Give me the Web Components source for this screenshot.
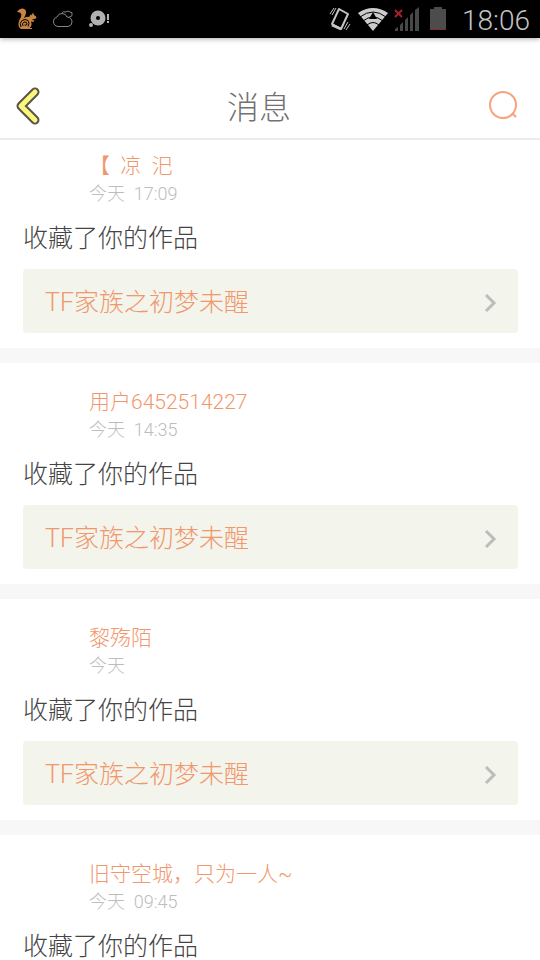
<!DOCTYPE html>
<html lang="zh-CN">
<head>
<meta charset="utf-8">
<meta name="viewport" content="width=device-width, initial-scale=1">
<title>消息</title>
<style>
body { margin: 0; background: #fff; font-family: Roboto, "Noto Sans CJK SC", sans-serif; font-weight: 300; }
</style>
</head>
<body>
<messages-app></messages-app>

<template id="status-bar">
<style>
:host { display: flex; align-items: center; justify-content: space-between; height: 38px; background: #000; padding: 0 10px 0 16px; box-shadow: 0 1px 5px #0005; }
div { display: flex; align-items: center; }
svg { display: block; }
.notes { gap: 14px; }
.system { gap: 6px; }
time { font-size: 28px; line-height: 38px; color: #c4c4c4; margin-left: 6px; padding-top: 4px; }
</style>
<div class="notes">
<svg width="22" height="22" viewBox="0 0 22 22" aria-hidden="true"><path fill="#c98440" d="M1 4Q3 0.500 6.500 0.500Q10.500 1 10 5Q9.500 8 7.500 10.500Q10 8 13 9L15 6L15.500 7.500L17 4.500L18 7Q20.500 8 20.500 9.500Q20 11 17.500 11L16 12L18.500 12.500L17.500 14L15 13.500Q16.500 18 13.500 20H16V21H5Q2 19 2.500 15Q3 12 5 9Q6 6 4.500 5Q3 4 1 4Z"/><path d="M5 19Q3 15 6 12.500Q9 10.500 12 12.500Q14 15 12 18.500M7 18Q5.500 15.500 8 14Q11 13.500 11 16Q10.500 18 8.500 17" fill="none" stroke="#000"/></svg>
<svg width="22" height="18" viewBox="0 0 22 18" fill="none" stroke="#858585" aria-hidden="true"><path d="M6 16.500Q1.500 16 1.500 11Q1.500 8 5 7Q6 3.500 10 3.500Q14 3.500 15 7Q20 7.500 20 12Q20 16 16 16.500Z"/><path d="M10 3Q11 1 14 2Q16 0 18 2Q21 2 20 5Q20 7 17 7"/></svg>
<svg width="22" height="20" viewBox="0 0 22 20" fill="#b0b0b0" aria-hidden="true"><circle cx="10" cy="9" r="7.500"/><circle cx="10" cy="9" r="2" fill="#000"/><circle cx="3" cy="16" r="2"/><path d="M19 5h2v6h-2zM19 12h2v2h-2z"/></svg>
</div>
<div class="system">
<svg width="24" height="28" viewBox="0 0 24 28" fill="none" stroke="#c4c4c4" aria-hidden="true"><path stroke-width="2" stroke-linejoin="round" d="M11 4L20 9L13 24L4 19Z"/><path stroke-width="3" d="M4 20L13 24"/><path d="M8 3L4 10M6 3L2 9M20 17L16 24M22 19L18 25"/></svg>
<svg width="30" height="24" viewBox="0 0 30 24" aria-hidden="true"><path fill="#ccc" d="M0 6Q15 -4 30 6L15 24Z"/><path fill="none" stroke="#000" d="M2 10Q15 0 28 10M5 14Q15 6 25 14M9 18Q15 13 21 18"/><path d="M15 5L19 12H11Z"/></svg>
<svg width="26" height="26" viewBox="0 0 26 26" aria-hidden="true"><path fill="#484848" d="M1 23L4 21V25H1zM6 19L9 16V25H6zM11 14L14 11V25H11zM16 9L19 6V25H16zM21 4L25 1V25H21z"/><path stroke="#a82030" stroke-width="2" d="M1 4L8 11M8 4L1 11"/></svg>
<svg width="24" height="26" viewBox="0 0 24 26" aria-hidden="true"><path fill="#4c4c4c" d="M4 3h4V1h8v2h4v21H4z"/><path fill="#8a2833" d="M4 23h16v1H4z"/></svg>
<time>18:06</time>
</div>
</template>

<template id="title-bar">
<style>
:host { display: block; border-bottom: 2px solid #ececec; }
header { display: grid; grid-template-columns: 56px 1fr 56px; align-items: center; padding-top: 34px; height: 66px; }
h1 { margin: 0; font-family: "Noto Sans CJK SC", sans-serif; font-size: 32px; line-height: 48px; font-weight: 300; color: #727272; text-align: center; padding-right: 22px; }
button { border: 0; padding: 0; background: none; height: 48px; display: flex; align-items: center; }
.back { padding-left: 14px; }
.search { justify-content: flex-end; padding-right: 20px; }
</style>
<header>
<button class="back" aria-label="返回"><svg width="28" height="42" viewBox="0 0 28 42" fill="none" stroke-linecap="round" stroke-linejoin="round"><path stroke="#57544b" stroke-width="9" d="M21 8L7 22L21 36"/><path stroke="#fbf67c" stroke-width="5" d="M21 8L7 22L21 36"/></svg></button>
<h1><slot></slot></h1>
<button class="search" aria-label="搜索"><svg width="32" height="32" viewBox="0 0 32 32" fill="none" stroke="#f6a27c" stroke-width="2"><circle cx="15" cy="16" r="13"/><path d="M24 24L28 28"/></svg></button>
</header>
</template>

<template id="work-link">
<style>
:host { display: block; }
a { display: flex; align-items: center; justify-content: space-between; height: 64px; box-sizing: border-box; padding: 3px 20px 0 22px; background: #f3f4eb; border-radius: 4px; color: #f1976c; font-size: 25px; line-height: 36px; text-decoration: none; }
</style>
<a href="#work"><slot></slot><svg width="14" height="20" viewBox="0 0 14 20" fill="none" stroke="#bdbdb8" stroke-width="3" aria-hidden="true"><path d="M2 2L10 10L2 18"/></svg></a>
</template>

<template id="message-item">
<style>
:host { display: block; background: #fff; padding: 25px 22px 15px 23px; }
.who { padding-left: 66px; line-height: 28px; white-space: pre; }
.name { display: block; color: #f1976c; font-size: 21px; text-decoration: none; }
time { display: block; color: #bdbdbd; font-size: 18px; }
p { margin: 18px 0 17px; font-size: 25px; line-height: 26px; color: #444; }
</style>
<article><div class="who"><a class="name" href="#user"><slot name="name"></slot></a><time><slot name="time"></slot></time></div>
<p><slot></slot></p>
<slot name="work"></slot></article>
</template>

<template id="messages-app">
<style>
:host { display: flex; flex-direction: column; height: 100vh; overflow: hidden; }
status-bar, title-bar { flex: none; }
main { flex: 1; min-height: 0; overflow: hidden; display: flex; flex-direction: column; gap: 15px; background: #f7f7f7; }
message-item { flex: none; }
message-item:first-child { padding-top: 12px; }
</style>
<status-bar></status-bar>
<title-bar>消息</title-bar>
<main>
<message-item><span slot="name">【  凉  汜</span><span slot="time">今天  17:09</span>收藏了你的作品<work-link slot="work">TF家族之初梦未醒</work-link></message-item>
<message-item><span slot="name">用户6452514227</span><span slot="time">今天  14:35</span>收藏了你的作品<work-link slot="work">TF家族之初梦未醒</work-link></message-item>
<message-item><span slot="name">黎殇陌</span><span slot="time">今天</span>收藏了你的作品<work-link slot="work">TF家族之初梦未醒</work-link></message-item>
<message-item><span slot="name">旧守空城，只为一人~</span><span slot="time">今天  09:45</span>收藏了你的作品</message-item>
</main>
</template>

<script>
for (const name of ["status-bar", "title-bar", "work-link", "message-item", "messages-app"]) {
  customElements.define(name, class extends HTMLElement {
    constructor() {
      super();
      this.attachShadow({ mode: "open" }).append(document.getElementById(name).content.cloneNode(true));
    }
  });
}
</script>
</body>
</html>
